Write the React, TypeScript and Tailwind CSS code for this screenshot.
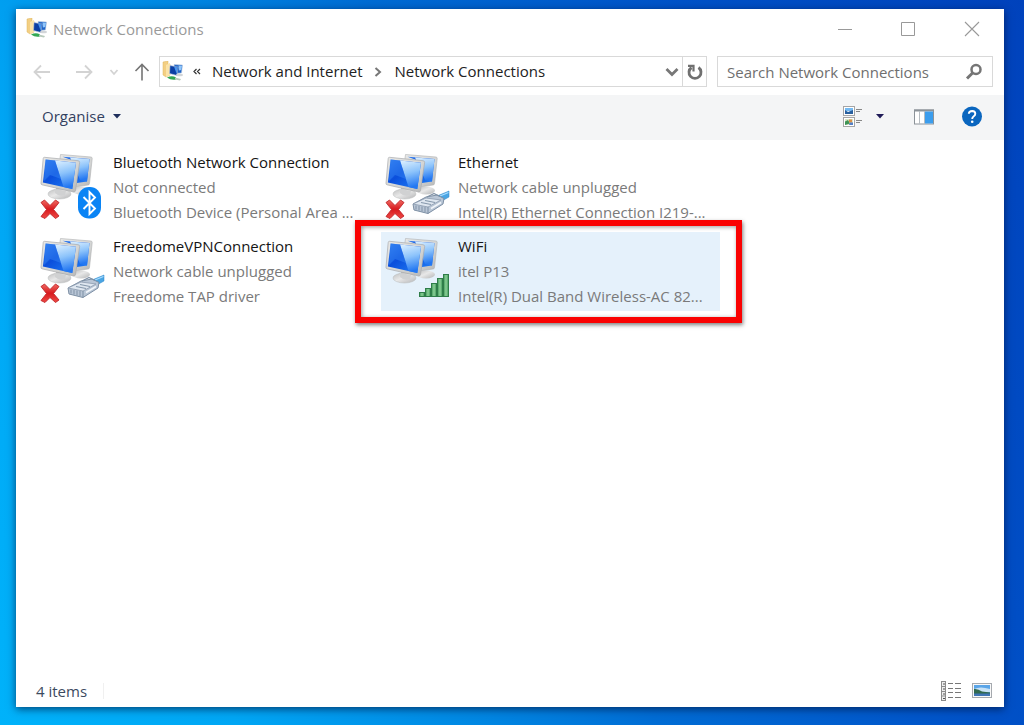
import React from "react";

type Badge = "bluetooth" | "cable" | "wifi";

interface Connection {
  name: string;
  status: string;
  device: string;
  badge: Badge;
  disconnected: boolean;
  selected?: boolean;
}

const connections: Connection[] = [
  { name: "Bluetooth Network Connection", status: "Not connected", device: "Bluetooth Device (Personal Area ...", badge: "bluetooth", disconnected: true },
  { name: "Ethernet", status: "Network cable unplugged", device: "Intel(R) Ethernet Connection I219-...", badge: "cable", disconnected: true },
  { name: "FreedomeVPNConnection", status: "Network cable unplugged", device: "Freedome TAP driver", badge: "cable", disconnected: true },
  { name: "WiFi", status: "itel P13", device: "Intel(R) Dual Band Wireless-AC 82...", badge: "wifi", disconnected: false, selected: true },
];

function Gradients() {
  return (
    <svg width="0" height="0" className="absolute" aria-hidden="true">
      <defs>
        <linearGradient id="screen" x1="0" y1="0" x2="0.9" y2="1">
          <stop offset="0" stopColor="#2f7cf0" />
          <stop offset="0.45" stopColor="#0b4fdc" />
          <stop offset="1" stopColor="#1f7cf5" />
        </linearGradient>
        <linearGradient id="glare" x1="0" y1="0" x2="0.2" y2="1">
          <stop offset="0" stopColor="#dff1ff" />
          <stop offset="0.5" stopColor="#8cc3fb" />
          <stop offset="1" stopColor="#2478f2" />
        </linearGradient>
        <linearGradient id="frame" x1="0" y1="0" x2="1" y2="1">
          <stop offset="0" stopColor="#e9e9e7" />
          <stop offset="0.6" stopColor="#d3d4d3" />
          <stop offset="1" stopColor="#b5b6b6" />
        </linearGradient>
        <linearGradient id="stand" x1="0" y1="0" x2="1" y2="1">
          <stop offset="0" stopColor="#bdbebf" />
          <stop offset="0.45" stopColor="#e8e8e8" />
          <stop offset="1" stopColor="#b4b5b6" />
        </linearGradient>
        <linearGradient id="cross" x1="0" y1="0" x2="0" y2="1">
          <stop offset="0" stopColor="#f06a62" />
          <stop offset="0.5" stopColor="#d81a1f" />
          <stop offset="1" stopColor="#ee4a45" />
        </linearGradient>
        <linearGradient id="bars" x1="0" y1="0" x2="1" y2="0">
          <stop offset="0" stopColor="#3f9a59" />
          <stop offset="0.5" stopColor="#8ccf98" />
          <stop offset="1" stopColor="#3f9a59" />
        </linearGradient>
      </defs>
    </svg>
  );
}

function BluetoothBadge() {
  return (
    <g>
      <rect x="38" y="35" width="23" height="31.5" rx="11" fill="#0a84f5" />
      <path d="M43.500 45 55 56.500 49.500 62V40L55 45.500 43.500 57" fill="none" stroke="#fff" strokeWidth="1.900" strokeLinejoin="miter" />
    </g>
  );
}

function CableBadge() {
  return (
    <g strokeLinejoin="round">
      <path d="M52 44 64 39V45L55 50Z" fill="#4aa5e3" stroke="#2f86c8" strokeWidth="0.500" />
      <path d="M55 44 63.500 40.500" stroke="#a9dcff" strokeWidth="1.300" />
      <path d="M28 52 41 45 52 43 59 46.500 58 52 43 61.500 29 58Z" fill="#b9c6d6" stroke="#7d8fa4" strokeWidth="1" />
      <path d="M28 52 41 46 56 48 43 55Z" fill="#dfe7f0" stroke="#8b9bae" strokeWidth="0.800" />
      <path d="M43 55V61.500" stroke="#7d8fa4" strokeWidth="1" />
      <path d="M31 53.500V57.500M34 54V58.500M37 54.500V59.500M40 55V60" stroke="#8192a6" strokeWidth="1" />
      <path d="M36 50.500 46 52.500M40 48.500 50 50.500" stroke="#8698ac" strokeWidth="1.200" />
      <path d="M46 56.500 56 50.500" stroke="#f2f6fa" strokeWidth="1.500" />
      <path d="M42 45 49 41.500 55 44.500" fill="none" stroke="#7f91a6" strokeWidth="1.300" />
    </g>
  );
}

function WifiBadge() {
  const bars = [
    { x: 34, y: 57 },
    { x: 40, y: 53 },
    { x: 46, y: 48 },
    { x: 52, y: 43 },
    { x: 58, y: 39 },
  ];
  return (
    <g>
      {bars.map((b) => (
        <rect key={b.x} x={b.x + 0.5} y={b.y - 0.5} width="5" height={61 - b.y} fill="url(#bars)" stroke="#2f7d49" strokeWidth="1" />
      ))}
    </g>
  );
}

function ConnectionIcon({ badge, disconnected }: { badge: Badge; disconnected: boolean }) {
  return (
    <svg viewBox="0 -2 68 70" className="h-[70px] w-[68px] shrink-0" aria-hidden="true">
      <ellipse cx="41" cy="38.500" rx="9" ry="4" fill="url(#stand)" />
      <path d="M20.500 2.500 51 5Q52.300 5.200 52.200 6.500L49.500 31.500Q49.300 33 48 33L34 35 19.500 10Z" fill="url(#frame)" stroke="#aeb0b1" strokeWidth="0.600" />
      <path d="M22.500 4.800 49.500 7 47 29.500 37 31V10Z" fill="url(#screen)" />
      <path d="M30 5.500 49.500 7 47 29.500 40 28Z" fill="url(#glare)" />
      <path d="M16 33 28 36 27 43H16Z" fill="#bcbdbe" />
      <ellipse cx="19.500" cy="42" rx="11.500" ry="5" fill="url(#stand)" stroke="#b9babb" strokeWidth="0.500" />
      <path d="M15 37 26 39 25 43Q19 45 15 41Z" fill="#d0d1d2" />
      <path d="M4.500 5.300 38 8.700Q39.800 9 39.600 10.500L35.500 38.500Q35 40.300 33.500 40L2 32.800Q.7 32.400 1 31L3.200 6.500Q3.400 5.200 4.500 5.300Z" fill="url(#frame)" stroke="#a9abad" strokeWidth="0.700" />
      <path d="M5.600 7.500 36 10.800 32.300 37 2.900 30.600Z" fill="url(#screen)" />
      <path d="M15 8.500 36 10.800 32.300 37 23.500 35Z" fill="url(#glare)" />
      <path d="M5.600 7.500 15 8.500 21 27 10 23 4 29Z" fill="#3787f4" opacity="0.450" />
      {badge === "bluetooth" && <BluetoothBadge />}
      {badge === "cable" && <CableBadge />}
      {badge === "wifi" && <WifiBadge />}
      {disconnected && (
        <path d="M1 50.500 4.500 48 10 53.500 15.500 48 19 50.500 13.500 57.500 19 64 15.500 66.500 10 61.500 5 66.500 1 64.500 6.500 57.500Z" fill="url(#cross)" stroke="#c0262a" strokeWidth="0.900" strokeLinejoin="round" />
      )}
    </svg>
  );
}

function NetworkFolderIcon() {
  return (
    <svg viewBox="0 0 22 22" className="size-[22px] shrink-0" aria-hidden="true">
      <path d="M1 1 6 0V4L8 3V14L4 16 1 14Z" fill="#f3cf83" stroke="#dfb45d" strokeWidth="0.500" />
      <path d="M4 4 8 2V14L4 16Z" fill="#fbe3a8" />
      <path d="M12 3.500 20.500 4 19.500 12 13 12.500Z" fill="#1f64c8" stroke="#c3cfdd" strokeWidth="0.600" />
      <path d="M16.500 4.500 20 4.700 19.300 9 17 9.500Z" fill="#8fc6fb" />
      <path d="M8 4.500 16 6 15 14.500 7.500 12.500Z" fill="#0c3fa4" stroke="#b9c6d8" strokeWidth="0.600" />
      <path d="M12 5.500 15.500 6.300 14.700 13Z" fill="#4a96ee" />
      <ellipse cx="17.500" cy="14" rx="3.500" ry="1.300" fill="#d2d5d8" />
      <path d="M5 16.500Q10 14 14 16.500L14 18.500Q9 19.500 5 16.500Z" fill="#35a853" />
      <path d="M13 16.500 19 18 18 19.500 13 18.500Z" fill="#b7c9bb" />
    </svg>
  );
}

function TitleBar() {
  return (
    <header className="flex h-10 items-center pl-[10px]">
      <NetworkFolderIcon />
      <h1 className="ml-[5px] text-[15px] text-[#9a9a9a]">Network Connections</h1>
      <div className="ml-auto flex">
        <button aria-label="Minimise" className="flex h-10 w-[62px] items-center justify-center text-[#999]">
          <svg viewBox="0 0 16 16" className="size-4"><path d="M1 8.500H15" stroke="currentColor" /></svg>
        </button>
        <button aria-label="Maximise" className="flex h-10 w-16 items-center justify-center text-[#999]">
          <svg viewBox="0 0 16 16" className="size-4"><path d="M1.500 1.500H14.500V14.500H1.500Z" fill="none" stroke="currentColor" /></svg>
        </button>
        <button aria-label="Close" className="flex h-10 w-16 items-center justify-center text-[#999]">
          <svg viewBox="0 0 16 16" className="size-4 shrink-0"><path d="M1 1 15 15M15 1 1 15" stroke="currentColor" strokeWidth="1.100" /></svg>
        </button>
      </div>
    </header>
  );
}

function AddressRow() {
  return (
    <nav className="flex h-[46px] items-center pb-2 pr-[11px] pt-[7px]" aria-label="Address">
      <div className="flex w-[143px] shrink-0 items-center pl-[17px]">
        <button aria-label="Back" className="text-[#d3d3d3]">
          <svg viewBox="0 0 18 18" className="size-[18px]"><path d="M17 9H1.500M8 2.500 1.500 9 8 15.500" fill="none" stroke="currentColor" strokeWidth="1.800" /></svg>
        </button>
        <button aria-label="Forward" className="ml-6 text-[#d3d3d3]">
          <svg viewBox="0 0 18 18" className="size-[18px]"><path d="M1 9H16.500M10 2.500 16.500 9 10 15.500" fill="none" stroke="currentColor" strokeWidth="1.800" /></svg>
        </button>
        <button aria-label="Recent locations" className="ml-4 text-[#d3d3d3]">
          <svg viewBox="0 0 10 10" className="size-[10px]"><path d="M1.500 3 5 7 8.500 3" fill="none" stroke="currentColor" strokeWidth="1.800" /></svg>
        </button>
        <button aria-label="Up" className="ml-[14px] text-[#757575]">
          <svg viewBox="0 0 18 18" className="size-[18px]"><path d="M9 17.500V2M2.500 8 9 1.500 15.500 8" fill="none" stroke="currentColor" strokeWidth="1.600" /></svg>
        </button>
      </div>
      <div className="flex h-[31px] flex-1 border border-[#d9d9d9] text-[15px] text-[#222]">
        <div className="flex flex-1 items-center pl-[2px]">
          <NetworkFolderIcon />
          <svg viewBox="0 0 8 8" className="ml-[9px] size-2" aria-hidden="true"><path d="M3.500 1 1 3.500 3.500 6M7 1 4.500 3.500 7 6" fill="none" stroke="#333" strokeWidth="1.200" /></svg>
          <a href="#network-and-internet" className="ml-[11px] whitespace-nowrap">Network and Internet</a>
          <svg viewBox="0 0 8 10" className="mx-3 h-[10px] w-2" aria-hidden="true"><path d="M1.500 1 6 5 1.500 9" fill="none" stroke="#777" strokeWidth="2" /></svg>
          <a href="#network-connections" className="whitespace-nowrap">Network Connections</a>
        </div>
        <button aria-label="Previous locations" className="flex w-5 items-center justify-center text-[#777]">
          <svg viewBox="0 0 14 10" className="h-[10px] w-[14px]"><path d="M1.500 2 7 7.500 12.500 2" fill="none" stroke="currentColor" strokeWidth="2.800" /></svg>
        </button>
        <button aria-label="Refresh" className="flex w-6 items-center justify-center border-l border-[#d9d9d9] text-[#707070]">
          <svg viewBox="0 0 16 16" className="size-4"><path d="M11.500 3.500A6 6 0 1 1 4.500 3.500" fill="none" stroke="currentColor" strokeWidth="2.800" /><path d="M1 1.800H6.500V7.500" fill="none" stroke="currentColor" strokeWidth="2.200" /></svg>
        </button>
      </div>
      <div className="ml-[10px] flex h-[31px] w-[276px] items-center border border-[#d9d9d9] pl-[9px] pr-[9px]">
        <input type="search" aria-label="Search Network Connections" placeholder="Search Network Connections" className="h-full min-w-0 flex-1 text-[15px] text-[#222] outline-none placeholder:text-[#6f6f6f]" />
        <svg viewBox="0 0 18 18" className="size-[18px] shrink-0 text-[#757575]" aria-hidden="true"><circle cx="11" cy="6.500" r="4.500" fill="none" stroke="currentColor" strokeWidth="2.500" /><path d="M7.800 9.800 2 15.500" stroke="currentColor" strokeWidth="3" /></svg>
      </div>
    </nav>
  );
}

function CommandBar() {
  return (
    <div className="flex h-[45px] items-center bg-[#f4f5f6] pb-[2px] pl-[26px] pr-[21px]">
      <button className="flex items-center text-[15px] text-[#33415f]">
        Organise
        <svg viewBox="0 0 8 5" className="ml-2 h-[5px] w-2" aria-hidden="true"><path d="M0 0H8L4 4.500Z" fill="#1f2f5c" /></svg>
      </button>
      <button aria-label="Change your view" className="ml-auto">
        <svg viewBox="0 0 20 22" className="h-[22px] w-5">
          <g fill="#fff" stroke="#a5a5a5"><rect x="0.500" y="0.500" width="11" height="9" /><rect x="0.500" y="11.500" width="11" height="9" /></g>
          <rect x="2" y="2" width="8" height="3" fill="#75baf2" /><path d="M2 4 5 6 10 4V8H2Z" fill="#285f9e" />
          <rect x="2" y="13" width="8" height="6" fill="#d9e6c8" /><path d="M2 15.500 5 14 7 17.500 2 19Z" fill="#3e9355" /><rect x="6" y="13.500" width="3" height="3" fill="#da8e45" /><path d="M7 16.500H10V19H6Z" fill="#547ec5" />
          <path d="M13 3.500H19M13 5.500H17M13 14.500H19M13 16.500H17" stroke="#888" />
        </svg>
      </button>
      <button aria-label="More view options" className="ml-3 p-px">
        <svg viewBox="0 0 8 5" className="h-[5px] w-2"><path d="M0 0H8L4 4.500Z" fill="#201b58" /></svg>
      </button>
      <button aria-label="Show the preview pane" className="ml-7">
        <svg viewBox="0 0 22 16" className="h-4 w-[22px]"><rect x="1.500" y="1" width="19" height="14" fill="#fff" stroke="#8c9399" /><path d="M1 1.500H21" stroke="#8c9399" strokeWidth="2" /><rect x="12" y="2.500" width="8" height="12" fill="#3b9ded" /><path d="M6.500 2V15M11.500 2V15" stroke="#b6bcc1" /></svg>
      </button>
      <button aria-label="Get help" className="ml-[26px]">
        <svg viewBox="0 0 22 22" className="size-[22px]"><circle cx="11" cy="10.500" r="10" fill="#0a66bf" /><path d="M7.800 7.800Q8 5 11.200 5 14.300 5.200 14.300 7.800 14.300 9.400 12.500 10.500 11.200 11.400 11.200 13" fill="none" stroke="#fff" strokeWidth="1.900" /><circle cx="11.200" cy="15.700" r="1.300" fill="#fff" /></svg>
      </button>
    </div>
  );
}

function ConnectionTile({ item }: { item: Connection }) {
  return (
    <li className={item.selected ? "relative bg-[#e5f1fb]" : "relative"}>
      <button className="flex h-[79px] w-full items-start pl-1 pt-[2px] text-left">
        <ConnectionIcon badge={item.badge} disconnected={item.disconnected} />
        <span className="ml-[5px] flex flex-col whitespace-nowrap text-[15px] leading-[25px] text-[#7a7a7a]">
          <span className="text-[#151515]">{item.name}</span>
          <span>{item.status}</span>
          <span>{item.device}</span>
        </span>
      </button>
      {item.selected && (
        <span className="pointer-events-none absolute -bottom-3 -left-[26px] -right-[22px] -top-3 border-[6px] border-[#fa0202] shadow-[1px_2px_4px_rgba(0,0,0,0.5),inset_1px_1px_4px_rgba(0,0,0,0.4)]" />
      )}
    </li>
  );
}

function StatusBar() {
  return (
    <footer className="flex h-[34px] items-center pl-5 pr-3 pt-[2px] text-[15px] text-[#3c4a60]">
      <span>4 items</span>
      <span className="ml-4 h-4 w-px bg-[#f0f0f0]" />
      <button aria-label="Details view" className="ml-auto">
        <svg viewBox="0 0 22 20" className="h-5 w-[22px]"><rect x="1.500" y="0.500" width="4" height="19" fill="#eee" stroke="#8b8b8b" /><path d="M2 5.500H6M2 10.500H6M2 15H6" stroke="#8b8b8b" /><path d="M3 3H5M3 8H5M3 13H5M3 17.500H5" stroke="#555" /><path d="M8 2.500H13M15 2.500H21M8 7.500H13M15 7.500H21M8 11.500H13M15 11.500H21M8 16.500H13M15 16.500H21" stroke="#777" /></svg>
      </button>
      <button aria-label="Large icons view" className="ml-[10px]">
        <svg viewBox="0 0 20 16" className="h-4 w-5"><rect x="0.500" y="0.500" width="19" height="14" fill="#f8f8f8" stroke="#a5a9ae" /><rect x="2" y="2" width="16" height="11" fill="#5aa5e8" /><path d="M2 6Q8 3 18 6V9H2Z" fill="#c8e2f6" /><path d="M2 6Q6 5.500 10 8.500L18 9.500V11H2Z" fill="#31694f" /><path d="M2 10.500H18V13H2Z" fill="#3f75b5" /></svg>
      </button>
    </footer>
  );
}

export default function App() {
  return (
    <div className="flex min-h-screen bg-[linear-gradient(68deg,#00b2fa_0%,#00a6f4_18%,#0086e2_37%,#006cd4_50%,#0052c8_74%,#0042bc_100%)] pb-[18px] pl-4 pr-5 pt-[9px] font-['Open_Sans',sans-serif]">
      <Gradients />
      <main className="flex flex-1 flex-col bg-white shadow-[0_2px_8px_rgba(0,20,60,0.7)]">
        <TitleBar />
        <AddressRow />
        <CommandBar />
        <ul className="grid grid-cols-[339px_339px] content-start gap-x-[6px] gap-y-[5px] pl-5 pt-2">
          {connections.map((item) => (
            <ConnectionTile key={item.name} item={item} />
          ))}
        </ul>
        <div className="flex-1" />
        <StatusBar />
      </main>
    </div>
  );
}
